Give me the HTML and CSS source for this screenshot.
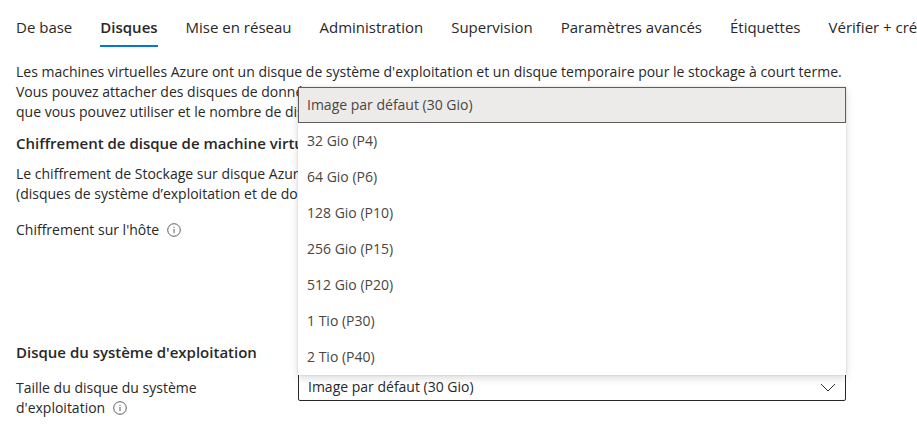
FILE: index.html
```html
<!DOCTYPE html>
<html lang="fr">
<head>
<meta charset="utf-8">
<meta name="viewport" content="width=device-width, initial-scale=1">
<title>Disques</title>
<link rel="stylesheet" href="styles.css">
</head>
<body>
<nav class="tabs">
  <a class="tab" href="#base">De base</a>
  <a class="tab tab-active" href="#disques" aria-current="page">Disques</a>
  <a class="tab" href="#reseau">Mise en réseau</a>
  <a class="tab" href="#administration">Administration</a>
  <a class="tab" href="#supervision">Supervision</a>
  <a class="tab" href="#parametres">Paramètres avancés</a>
  <a class="tab" href="#etiquettes">Étiquettes</a>
  <a class="tab" href="#verifier">Vérifier + créer</a>
</nav>
<main class="content">
  <p class="text">Les machines virtuelles Azure ont un disque de système d'exploitation et un disque temporaire pour le stockage à court terme.<br>Vous pouvez attacher des disques de données<br>que vous pouvez utiliser et le nombre de disques</p>
  <h2 class="heading">Chiffrement de disque de machine virtuelle</h2>
  <p class="text">Le chiffrement de Stockage sur disque Azure<br>(disques de système d’exploitation et de données)</p>
  <div class="row row-host">
    <span class="label">Chiffrement sur l'hôte
      <svg class="info" viewBox="0 0 14 14" aria-hidden="true"><circle cx="7" cy="7" r="6.3"/><path d="M7 6v4.2M7 3.8v1.1"/></svg>
    </span>
  </div>
  <h2 class="heading">Disque du système d'exploitation</h2>
  <div class="row">
    <label class="label" for="taille">Taille du disque du système d'exploitation
      <svg class="info" viewBox="0 0 14 14" aria-hidden="true"><circle cx="7" cy="7" r="6.3"/><path d="M7 6v4.2M7 3.8v1.1"/></svg>
    </label>
    <div class="field">
      <select class="select" id="taille"><option>Image par défaut (30 Gio)</option></select>
      <svg class="chevron" viewBox="0 0 16 9" aria-hidden="true"><path d="M1 1l7 7 7-7"/></svg>
      <div class="menu" role="listbox" aria-label="Taille du disque">
        <button class="option option-selected" type="button" role="option" aria-selected="true">Image par défaut (30 Gio)</button>
        <button class="option" type="button" role="option">32 Gio (P4)</button>
        <button class="option" type="button" role="option">64 Gio (P6)</button>
        <button class="option" type="button" role="option">128 Gio (P10)</button>
        <button class="option" type="button" role="option">256 Gio (P15)</button>
        <button class="option" type="button" role="option">512 Gio (P20)</button>
        <button class="option" type="button" role="option">1 Tio (P30)</button>
        <button class="option" type="button" role="option">2 Tio (P40)</button>
      </div>
    </div>
  </div>
</main>
</body>
</html>
```
FILE: styles.css
```css
* { box-sizing: border-box; }

body {
  margin: 0;
  padding: 15px 0 0 16px;
  overflow: hidden;
  background: #fff;
  color: #292827;
  font: 14px/20px "Open Sans", "Noto Sans", sans-serif;
}

.tabs {
  display: flex;
  gap: 28px;
  font-size: 15px;
  line-height: 24px;
  white-space: nowrap;
}

.tab {
  flex: none;
  padding-bottom: 6px;
  border-bottom: 2px solid transparent;
  color: inherit;
  text-decoration: none;
}

.tab-active {
  border-color: #0078d4;
  font-weight: 600;
}

.content { padding-top: 15px; }

.text {
  margin: 0;
  white-space: nowrap;
}

.heading {
  margin: 11px 0;
  font-size: 15px;
  font-weight: 600;
  line-height: 20px;
}

.row {
  display: grid;
  grid-template-columns: 200px minmax(0, 548px);
  column-gap: 82px;
  margin-right: 71px;
}

.row-host {
  min-height: 116px;
  margin-top: 11px;
}

.label { padding-top: 5px; }

.info {
  width: 14px;
  height: 14px;
  margin-left: 4px;
  vertical-align: -2px;
  fill: none;
  stroke: #605e5c;
}

.field {
  position: relative;
  align-self: start;
}

.select {
  display: block;
  width: 100%;
  height: 28px;
  padding: 0 32px 0 9px;
  appearance: none;
  border: 1px solid #292827;
  border-radius: 2px;
  background: #fff;
  color: inherit;
  font: inherit;
}

.chevron {
  position: absolute;
  right: 10px;
  top: 10px;
  width: 16px;
  height: 9px;
  fill: none;
  stroke: #323130;
  pointer-events: none;
}

.menu {
  position: absolute;
  right: 0;
  bottom: 26px;
  left: 0;
  background: #fff;
  box-shadow: 0 3px 8px rgba(0, 0, 0, 0.14), 0 0 2px rgba(0, 0, 0, 0.14);
}

.option {
  display: block;
  width: 100%;
  height: 36px;
  padding: 0 8px;
  border: 1px solid transparent;
  background: none;
  color: #484644;
  font: inherit;
  text-align: left;
}

.option-selected {
  border-color: #605e5c;
  background: #edebe9;
}
```
